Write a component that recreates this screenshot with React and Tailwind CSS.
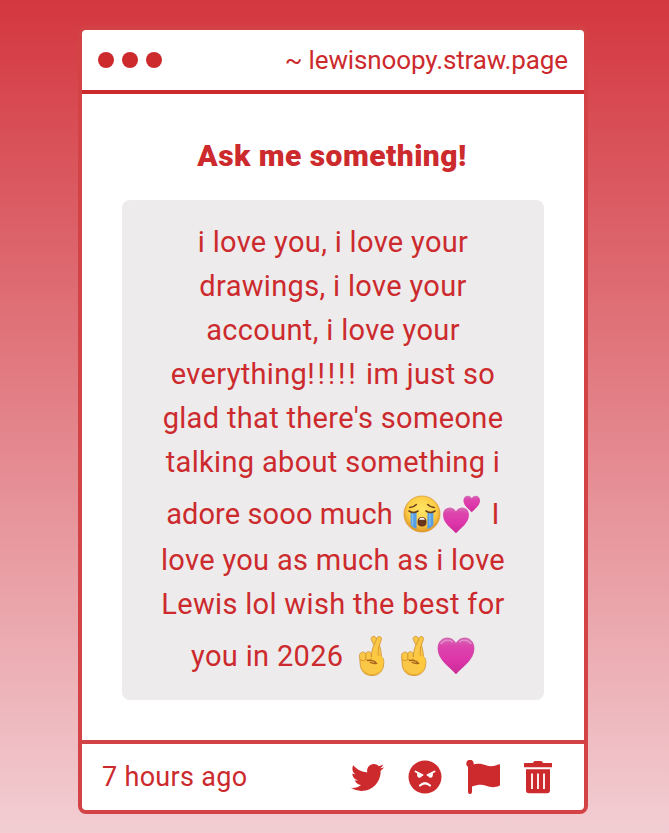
import { FaTwitter } from 'react-icons/fa';

const firstLines = ['i love you, i love your', 'drawings, i love your', 'account, i love your'];
const nextLines = ["glad that there's someone", 'talking about something i'];

function Defs() {
  return (
    <svg width="0" height="0" className="absolute" aria-hidden="true">
      <defs>
        <linearGradient id="pink" x1="0" y1="0" x2="0" y2="1">
          <stop offset="0" stopColor="#d670b8" />
          <stop offset="0.22" stopColor="#dc45ac" />
          <stop offset="0.6" stopColor="#de36aa" />
          <stop offset="1" stopColor="#c92a96" />
        </linearGradient>
        <radialGradient id="face" cx="0.5" cy="0.4" r="0.6">
          <stop offset="0" stopColor="#ffe567" />
          <stop offset="0.65" stopColor="#fdce45" />
          <stop offset="1" stopColor="#df9526" />
        </radialGradient>
      </defs>
    </svg>
  );
}

const heart = 'M19 37C13 30 1 23 1 11.5C1 4.5 5.5 1 10.3 1C14.3 1 17.5 3.2 19 6.8C20.5 3.2 23.7 1 27.7 1C32.5 1 37 4.5 37 11.5C37 23 25 30 19 37Z';

function Crying() {
  return (
    <svg viewBox="0 0 38 38" className="h-[38px] w-[38px] shrink-0">
      <circle cx="19" cy="19" r="18" fill="url(#face)" stroke="#d69430" strokeWidth=".7" />
      <path d="M7.6 17.500h6v16.600c-2.500-.8-4.400-2.200-6-4zM24.400 17.500h6v12.600c-1.600 1.800-3.500 3.200-6 4z" fill="#579fe4" />
      <path d="M9.500 18.500v12M27 18.500v12" stroke="#7ebcf2" strokeWidth="1.5" />
      <path d="M6 16q4.500 3 9 0M23 16q4.500 3 9 0M6.800 12.500q4-.3 6.500-3M24.700 9.500q2.500 2.700 6.500 3" fill="none" stroke="#68401a" strokeWidth="1.6" strokeLinecap="round" />
      <path d="M14.5 27c0-3.500 1.800-5 4.500-5s4.500 1.500 4.500 5-2 4.500-4.500 4.500-4.500-1-4.500-4.500z" fill="#69351b" />
      <path d="M16 24.700c.5-1.500 1.500-1.900 3-1.900s2.500.4 3 1.900z" fill="#fff" />
    </svg>
  );
}

function Hearts() {
  return (
    <svg viewBox="0 0 40 40" className="h-[40px] w-[40px] shrink-0">
      <g transform="translate(1.300 12.700) scale(.72)"><path d={heart} fill="url(#pink)" /></g>
      <g transform="translate(22 1.200) scale(.46)"><path d={heart} fill="url(#pink)" /></g>
    </svg>
  );
}

function Fingers() {
  return (
    <svg viewBox="0 0 28 42" className="h-[42px] w-[28px] shrink-0">
      <g fill="#fac846" stroke="#cf8f2e" strokeWidth=".8" strokeLinejoin="round">
        <path d="M16.500 11L13.200 4.500C12.500 1.500 16.500 0 18 2.800L21 9C22.500 13 23.300 17 23.500 23L16 23z" />
        <path d="M13.300 22C13.300 17 14.500 12.500 16.500 9L19 3C20.500 .2 24.300 1.500 23.300 4.800L20.500 13L20 20.500C24.800 21 26 24 25.800 28C25.500 36.500 20.500 40.600 14 40.600C6.500 40.600 2.500 35.500 2.200 29L1.500 20.500C1.600 16.600 6.800 16.200 7.800 18.700C8.500 15.900 12.500 16 13.300 19Z" />
      </g>
      <path d="M14.500 20.500h7.500c2.800 1 3.500 4 3.300 7.500-.4 5-3 8.500-6 10.500z" fill="#fcc93f" />
      <path d="M4 33c3 6 13 9.500 19 1.500-1.800 3.500-5 5.600-9 5.600-5 0-8.500-2.600-10-7.100z" fill="#e8a732" />
      <path d="M7.800 19v5M2.500 25q3 1.800 5.600-.5q3 1.200 5.600-.5" fill="none" stroke="#cf8f2a" strokeWidth=".9" strokeLinecap="round" />
      <path d="M9.500 25.700c3-.5 7 0 9 2.600-2.700.5-4.300.1-6.300-.9" fill="none" stroke="#a8641c" strokeWidth="1.300" strokeLinecap="round" />
    </svg>
  );
}

function PinkHeart() {
  return (
    <svg viewBox="0 0 38 38" className="h-[38px] w-[38px] shrink-0">
      <path d={heart} fill="url(#pink)" stroke="#c33a9e" strokeWidth=".6" />
      <path d="M4 6.5q5-5.500 11.500-1.800M22.500 4.700q6-3.700 11.500 1.800" stroke="#e596cf" strokeWidth="1.2" fill="none" strokeLinecap="round" />
    </svg>
  );
}

const row = 'flex items-center justify-center whitespace-pre';

export default function App() {
  return (
    <main className="flex h-[833px] w-[669px] items-start bg-linear-to-b/srgb from-[#d4373f] to-[#f2ced3] pt-[26px] pl-[78px] font-[Roboto,sans-serif] text-[#cc2a2d]">
      <Defs />
      <article className="flex h-[788px] w-[510px] flex-col overflow-hidden rounded-lg border-4 border-[#d34346] bg-white">
        <header className="flex h-16 shrink-0 items-center justify-between border-b-4 border-[#cc2a2d] pr-4 pl-4">
          <div className="flex gap-2">
            <i className="size-4 rounded-full bg-[#cc2a2d]" />
            <i className="size-4 rounded-full bg-[#cc2a2d]" />
            <i className="size-4 rounded-full bg-[#cc2a2d]" />
          </div>
          <span className="text-[26px] leading-[60px] tracking-[-0.12px]">~ lewisnoopy.straw.page</span>
        </header>
        <section className="flex grow flex-col items-center">
          <h1 className="mt-[40px] pr-[2px] text-[30px] leading-[44px] font-black tracking-[0.45px]">Ask me something!</h1>
          <div className="mt-[22px] h-[500px] w-[422px] rounded-lg bg-[#edebec] pt-5 text-[29px] leading-[44px] tracking-[0.33px]">
            {firstLines.map((l) => (
              <p key={l} className={row}>{l}</p>
            ))}
            <p className={row}>
              everything<span className="tracking-[2.8px]">!!!!!</span> im just so
            </p>
            {nextLines.map((l) => (
              <p key={l} className={row}>{l}</p>
            ))}
            <p className={row + ' h-[54px] pt-2 pb-0.5'}>
              <span className="pr-[3px] tracking-[0.1px]">adore sooo much </span>
              <Crying /><Hearts />
              <span className="pl-[3px]"> I</span>
            </p>
            <p className={row}>love you as much as i love</p>
            <p className={row}>Lewis lol wish the best for</p>
            <p className={row + ' h-[54px] pt-2 pb-0.5'}>
              <span>you in 2026 </span>
              <span className="flex items-center gap-[14px] pl-[7px]"><Fingers /><Fingers /></span>
              <span className="pl-[9px]"><PinkHeart /></span>
            </p>
          </div>
        </section>
        <footer className="flex h-[70px] shrink-0 items-center justify-between border-t-4 border-[#d34346] pr-8 pl-5">
          <span className="text-[27px] tracking-[0.3px]">7 hours ago</span>
          <div className="flex items-center gap-6">
            <FaTwitter className="size-[33px]" />
            <svg viewBox="0 0 34 34" className="size-[34px]">
              <circle cx="17" cy="17" r="16.5" fill="currentColor" />
              <path d="M7.500 11.500l7 3.500M26.500 11.500l-7 3.500" stroke="#fff" strokeWidth="1.800" strokeLinecap="round" />
              <path d="M12 25.500q5-4.500 10 0" stroke="#fff" strokeWidth="2.200" strokeLinecap="round" fill="none" />
              <path d="M9 12.800l5 2.400a2.400 2.400 0 0 1-4.800.3zM25 12.800l-5 2.400a2.400 2.400 0 0 0 4.800.3z" fill="#fff" />
            </svg>
            <svg viewBox="0 0 34 34" className="size-[34px]" fill="currentColor">
              <circle cx="4" cy="3.500" r="3.700" />
              <path d="M2 4h4v28a2 2 0 0 1-4 0zM6 5C12 3 16 4 20 5.300S28 6.500 33 4.300Q34 4 34 5V24.500Q34 25.500 33 26C28 28 24 27 20 25.700S12 24.500 6 26.500z" />
            </svg>
            <svg viewBox="0 0 28 34" className="h-[34px] w-[28px]" fill="currentColor">
              <path d="M.5 3h8.500Q9.500 1 11 1h6Q18.500 1 19 3h8.500q.5 0 .5.5V7.200H0V3.500Q0 3 .5 3zM2 9.300h24v21a3 3 0 0 1-3 3H5a3 3 0 0 1-3-3z" />
              <path d="M8 13.500v15.500M14 13.500v15.500M20 13.500v15.500" stroke="#fff" strokeWidth="1.800" />
            </svg>
          </div>
        </footer>
      </article>
    </main>
  );
}
